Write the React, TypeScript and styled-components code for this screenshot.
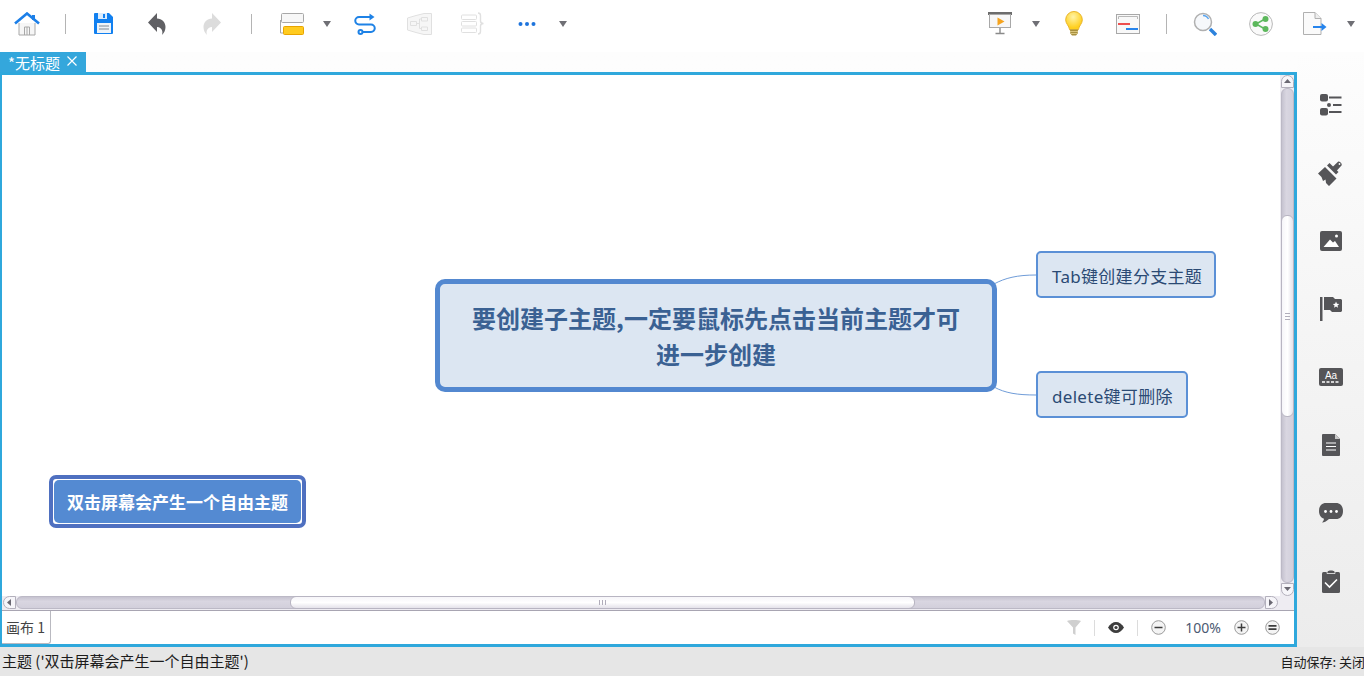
import styled, { createGlobalStyle } from "styled-components";

const GlobalStyle = createGlobalStyle`
  html, body {
    margin: 0;
    padding: 0;
    height: 100%;
    overflow: hidden;
    background: #ffffff;
    font-family: "Noto Sans CJK SC", "Noto Sans", sans-serif;
  }
  #root {
    height: 100%;
  }
`;

const Page = styled.div`
  width: 1364px;
  height: 676px;
  display: flex;
  flex-direction: column;
`;

const Toolbar = styled.header`
  height: 52px;
  flex: none;
  display: flex;
  justify-content: space-between;
  background: #ffffff;
`;

const ToolGroup = styled.div`
  display: flex;
`;

const Slot = styled.div<{ $w: number }>`
  width: ${(p) => p.$w}px;
  flex: none;
  display: flex;
  align-items: center;
  justify-content: center;
  padding-bottom: 5px;
  box-sizing: border-box;
`;

const Sep = styled.div`
  width: 1px;
  height: 20px;
  background: #b4b4b4;
`;

const Caret = styled.div`
  width: 0;
  height: 0;
  border-left: 4px solid transparent;
  border-right: 4px solid transparent;
  border-top: 6px solid #6f6f75;
`;

const Middle = styled.div`
  flex: 1;
  min-height: 0;
  display: flex;
`;

const Workspace = styled.div`
  width: 1297px;
  flex: none;
  display: flex;
  flex-direction: column;
  background: linear-gradient(#fdfdfd, #fbfbfb);
`;

const TabRow = styled.div`
  height: 20px;
  flex: none;
  display: flex;
`;

const FileTab = styled.div`
  width: 86px;
  height: 20px;
  box-sizing: border-box;
  background: #34a7dc;
  color: #ffffff;
  font-size: 15px;
  line-height: 21px;
  padding-left: 8px;
  display: flex;
  gap: 7px;
  white-space: nowrap;
`;

const Frame = styled.div`
  flex: 1;
  min-height: 0;
  display: flex;
  flex-direction: column;
  border: 3px solid #2fa8dc;
  border-left-width: 2px;
  background: #ffffff;
`;

const ViewRow = styled.div`
  flex: 1;
  min-height: 0;
  display: flex;
`;

const Canvas = styled.div`
  flex: 1;
  position: relative;
  overflow: hidden;
  background: #ffffff;
`;

const Connectors = styled.svg`
  position: absolute;
  left: 0;
  top: 0;
  width: 100%;
  height: 100%;
`;

const MainTopic = styled.div`
  position: absolute;
  left: 433px;
  top: 204px;
  width: 562px;
  height: 113px;
  box-sizing: border-box;
  border: 5px solid #5388d0;
  border-radius: 10px;
  background: #dce6f2;
  color: #3a6193;
  font-size: 24px;
  font-weight: 700;
  line-height: 36px;
  text-align: center;
  padding: 16px 26px 0;
`;

const SubTopic = styled.div<{ $left: number; $top: number; $w: number }>`
  position: absolute;
  left: ${(p) => p.$left}px;
  top: ${(p) => p.$top}px;
  width: ${(p) => p.$w}px;
  height: 47px;
  box-sizing: border-box;
  border: 2px solid #5b90d6;
  border-radius: 5px;
  background: #dce6f2;
  color: #2b4a74;
  font-family: "Noto Sans", "Noto Sans CJK SC", sans-serif;
  font-size: 17px;
  letter-spacing: 0.3px;
  line-height: 45px;
  padding: 1px 0 0 14px;
  white-space: nowrap;
`;

const FreeTopic = styled.div`
  position: absolute;
  left: 47px;
  top: 400px;
  width: 257px;
  height: 53px;
  box-sizing: border-box;
  border: 4px solid #4f70c0;
  border-radius: 7px;
  background: #ffffff;
  padding: 1px;
`;

const FreeTopicInner = styled.div`
  height: 100%;
  border-radius: 5px;
  background: #548ad2;
  color: #ffffff;
  font-size: 17px;
  font-weight: 700;
  line-height: 43px;
  text-align: center;
  white-space: nowrap;
`;

const VScroll = styled.div`
  width: 14px;
  flex: none;
  background: #eeecf2;
  display: flex;
  flex-direction: column;
  align-items: center;
`;

const ScrollEnd = styled.div`
  width: 13px;
  height: 13px;
  flex: none;
  border: 1px solid #b3b0bc;
  box-sizing: border-box;
  background: #f6f5f9;
  display: flex;
  align-items: center;
  justify-content: center;
`;

const VEnd = styled(ScrollEnd)<{ $bottom?: boolean }>`
  border-radius: ${(p) => (p.$bottom ? "0 0 7px 7px" : "7px 7px 0 0")};
`;

const HEnd = styled(ScrollEnd)<{ $right?: boolean }>`
  border-radius: ${(p) => (p.$right ? "0 7px 7px 0" : "7px 0 0 7px")};
`;

const VTrack = styled.div`
  flex: 1;
  width: 13px;
  box-sizing: border-box;
  border-radius: 6px;
  background: linear-gradient(90deg, #c6c3d0, #d9d6e1 40%, #d2cfdb);
  border: 1px solid #bcb9c6;
  padding-top: 126px;
`;

const VThumb = styled.div`
  height: 200px;
  border-radius: 6px;
  background: linear-gradient(90deg, #f6f5f9, #ffffff 50%, #e4e2ea);
  border: 1px solid #b8b5c2;
  margin: 0 -1px;
  display: flex;
  align-items: center;
  justify-content: center;
`;

const Grip = styled.div<{ $h?: boolean }>`
  width: ${(p) => (p.$h ? "7px" : "5px")};
  height: ${(p) => (p.$h ? "5px" : "7px")};
  background: ${(p) =>
    p.$h
      ? "repeating-linear-gradient(90deg, #b0adba 0 1px, transparent 1px 3px)"
      : "repeating-linear-gradient(#b0adba 0 1px, transparent 1px 3px)"};
`;

const HScroll = styled.div`
  height: 15px;
  flex: none;
  background: #eeecf2;
  display: flex;
  align-items: flex-start;
  border-bottom: 1px solid #a8a5b2;
  box-sizing: border-box;
  padding: 0 16px 0 1px;
`;

const HTrack = styled.div`
  flex: 1;
  height: 13px;
  box-sizing: border-box;
  border-radius: 6px;
  background: linear-gradient(#c6c3d0, #d9d6e1 40%, #d2cfdb);
  border: 1px solid #bcb9c6;
  padding-left: 273px;
`;

const HThumb = styled.div`
  width: 625px;
  height: 13px;
  box-sizing: border-box;
  border-radius: 6px;
  background: linear-gradient(#f6f5f9, #ffffff 50%, #e4e2ea);
  border: 1px solid #b8b5c2;
  margin-top: -1px;
  display: flex;
  align-items: center;
  justify-content: center;
`;

const SheetBar = styled.div`
  height: 33px;
  flex: none;
  display: flex;
  align-items: center;
  background: #ffffff;
`;

const SheetTab = styled.div`
  width: 49px;
  height: 33px;
  box-sizing: border-box;
  border: 1px solid #b9b9c0;
  border-top: none;
  border-left: none;
  border-radius: 0 0 3px 0;
  font-size: 14px;
  line-height: 32px;
  padding-left: 4px;
  color: #444444;
  white-space: nowrap;
`;

const SheetTools = styled.div`
  margin-left: auto;
  display: flex;
  align-items: center;
  height: 100%;
`;

const ThinSep = styled.div`
  width: 1px;
  height: 16px;
  background: #dcdcdc;
`;

const Zoom = styled.div`
  width: 53px;
  box-sizing: border-box;
  padding-right: 5px;
  text-align: center;
  font-size: 14px;
  color: #4c5a72;
  font-family: "Noto Sans", "Noto Sans CJK SC", sans-serif;
`;

const Sidebar = styled.aside`
  flex: 1;
  display: flex;
  flex-direction: column;
  padding-top: 19px;
  background: linear-gradient(#fdfdfd, #ececec);
`;

const SideItem = styled.div`
  height: 68px;
  flex: none;
  display: flex;
  align-items: center;
  justify-content: center;
`;

const StatusBar = styled.footer`
  height: 29px;
  flex: none;
  background: #e6e6e6;
  display: flex;
  justify-content: space-between;
  font-size: 15px;
  line-height: 27px;
  color: #1c1c1c;
  padding-left: 2px;
  white-space: nowrap;
  overflow: hidden;
`;

const AutoSave = styled.span`
  font-size: 13px;
  line-height: 29px;
  margin-right: -1px;
`;

const Dark = "#555558";

const HomeIcon = () => (
  <svg width="26" height="24" viewBox="0 0 26 24">
    <path d="M5 11v12h16V11" fill="#f6f6f6" stroke="#a8a8a8" />
    <path d="M10.500 23v-8h5v8M13 15v8" fill="none" stroke="#a8a8a8" />
    <path d="M1 11.500 13 1.500l12 10" fill="none" stroke="#1c7fe8" strokeWidth="2.600" />
    <path d="M18 3h3v5h-3z" fill="#1c7fe8" />
  </svg>
);

const SaveIcon = () => (
  <svg width="20" height="21" viewBox="0 0 20 21">
    <path d="M1 0h14l4 4v16a1 1 0 0 1-1 1H1a1 1 0 0 1-1-1V1a1 1 0 0 1 1-1z" fill="#1180f0" />
    <path d="M4 0h9v6H4z" fill="#ffffff" opacity=".85" />
    <path d="M9 1h2v4H9z" fill="#1180f0" />
    <path d="M3 10h14v10H3z" fill="#eef3f8" />
    <path d="M5 13h10M5 16h10" stroke="#7d8894" strokeWidth="1" />
  </svg>
);

const UndoIcon = ({ color, flip }: { color: string; flip?: boolean }) => (
  <svg width="18" height="22" viewBox="0 0 18 22" style={flip ? { transform: "scaleX(-1)" } : undefined}>
    <path d="M9 0v5.500c5 .3 8.500 3.600 8.500 8.500 0 3.200-1.300 6-3.500 8 1-3 .4-7.500-5-8V19L0 9.500z" fill={color} />
  </svg>
);

const TopicIcon = () => (
  <svg width="24" height="22" viewBox="0 0 24 22">
    <path d="M.5 7v13h3" fill="none" stroke="#a8a8a8" />
    <rect x="1.500" y=".5" width="22" height="9" rx="1" fill="#f7f7f7" stroke="#a8a8a8" />
    <rect x="3.500" y="13.500" width="20" height="8" rx="1" fill="#ffcb1f" stroke="#e8a400" />
  </svg>
);

const LinkIcon = () => (
  <svg width="22" height="22" viewBox="0 0 22 22" fill="none" stroke="#1e82e6" strokeWidth="2">
    <path d="M17 4H5a3.600 3.600 0 0 0 0 7.500h12a3.600 3.600 0 0 1 0 7.500H8" />
    <path d="M15.500 0.500v7l5-3.500z" fill="#1e82e6" stroke="none" />
    <circle cx="6.500" cy="19" r="2" />
  </svg>
);

const MapIcon = () => (
  <svg width="25" height="22" viewBox="0 0 25 22" fill="#f6f6f6" stroke="#e0e0e0">
    <path d="M.5 5 9 2.500l8-2h7.500v21H17l-8-2L.5 17z" />
    <path d="M3.500 8.500h6v4h-6zM14.500 4.500h6v3.500h-6zM14.500 14h6v3.500h-6zM9.500 10.500h3M12.500 6v9.500M12.500 6h2M12.500 15.500h2" fill="none" />
  </svg>
);

const BraceIcon = () => (
  <svg width="24" height="24" viewBox="0 0 24 24" fill="none" stroke="#e0e0e0" strokeWidth="1">
    <rect x=".5" y="3" width="15" height="4.500" rx="1" />
    <rect x=".5" y="9.500" width="15" height="4.500" rx="1" />
    <rect x=".5" y="16" width="15" height="4.500" rx="1" />
    <path d="M17 1c2 0 2.500 1 2.500 2.500v5.500c0 1 1 2.500 3 2.500-2 0-3 1.500-3 2.500v5.500c0 1.500-.5 2.500-2.500 2.500" strokeWidth="1.400" />
  </svg>
);

const DotsIcon = () => (
  <svg width="18" height="6" viewBox="0 0 18 6" fill="#1e74dc">
    <circle cx="2.500" cy="3" r="2" />
    <circle cx="9" cy="3" r="2" />
    <circle cx="15.500" cy="3" r="2" />
  </svg>
);

const PresentIcon = () => (
  <svg width="24" height="23" viewBox="0 0 24 23">
    <rect x="0" y="0" width="24" height="3" fill="#6c6c6c" />
    <rect x="1.500" y="2.500" width="21" height="13" fill="#f7f7f7" stroke="#a8a8a8" />
    <path d="M9.500 5.500v8l7-4z" fill="#f5a31e" />
    <path d="M12 16v5M7.500 21.500h9" stroke="#8a8a8a" strokeWidth="1.400" />
  </svg>
);

const BulbIcon = () => (
  <svg width="18" height="25" viewBox="0 0 18 25">
    <defs>
      <radialGradient id="bulbGlow" cx="45%" cy="30%" r="60%">
        <stop offset="0" stopColor="#fff3a6" />
        <stop offset="1" stopColor="#ffcf1c" />
      </radialGradient>
    </defs>
    <path d="M9 .5a8.300 8.300 0 0 0-8.300 8.300c0 4 3.300 5.700 4 10h8.600c.7-4.300 4-6 4-10A8.300 8.300 0 0 0 9 .5z" fill="url(#bulbGlow)" stroke="#e9b52c" />
    <path d="M5 18.500h8l-.3 4-1.700 2H7l-1.700-2z" fill="#a8903f" />
    <path d="M5 20.500h8M5.500 22.500h7" stroke="#e6d28c" strokeWidth=".8" />
  </svg>
);

const GanttIcon = () => (
  <svg width="24" height="20" viewBox="0 0 24 20">
    <rect x=".5" y=".5" width="23" height="19" fill="#f8f8f8" stroke="#a8a8a8" />
    <path d="M2.500 5V2.500h19V5" fill="none" stroke="#b8b8b8" />
    <rect x="2" y="9" width="12" height="2" fill="#ee4f4f" />
    <rect x="10" y="14" width="12" height="2" fill="#2684ec" />
  </svg>
);

const SearchIcon = () => (
  <svg width="24" height="24" viewBox="0 0 24 24" fill="none">
    <circle cx="10" cy="10" r="8.500" fill="#f6f8fb" stroke="#b0b0b0" strokeWidth="1.500" />
    <path d="M10 3.500a6.500 6.500 0 0 1 5.500 3.500" stroke="#5aa5ef" strokeWidth="1.400" />
    <path d="M17 17l6 6" stroke="#2c82dc" strokeWidth="3.400" />
  </svg>
);

const ShareIcon = () => (
  <svg width="24" height="24" viewBox="0 0 24 24">
    <circle cx="12" cy="12" r="11.400" fill="#fafafa" stroke="#b8b8b8" />
    <path d="M16 7l-9 5 9 5" fill="none" stroke="#5cb85c" strokeWidth="1.500" />
    <circle cx="16.500" cy="7" r="3" fill="#5cb85c" />
    <circle cx="6.500" cy="12" r="3" fill="#5cb85c" />
    <circle cx="16.500" cy="17" r="3" fill="#5cb85c" />
  </svg>
);

const ExportIcon = () => (
  <svg width="24" height="23" viewBox="0 0 24 23">
    <path d="M.5.500h11.500l6 6v16H.5z" fill="#fafafa" stroke="#b0b0b0" />
    <path d="M12 .500v6h6" fill="#eeeeee" stroke="#b0b0b0" />
    <path d="M10 15h9" stroke="#2684ec" strokeWidth="2" />
    <path d="M18.500 11l5 4-5 4z" fill="#2684ec" />
  </svg>
);

const OutlineSide = () => (
  <svg width="22" height="22" viewBox="0 0 22 22" fill={Dark}>
    <rect x="0" y="0" width="8" height="7.500" rx="2" />
    <rect x="0" y="14" width="8" height="7.500" rx="2" />
    <circle cx="9" cy="11" r="2" />
    <rect x="9" y="2.500" width="12.500" height="2" />
    <rect x="13" y="10" width="8.500" height="2" />
    <rect x="9" y="17" width="12.500" height="2" />
  </svg>
);

const BrushSide = () => (
  <svg width="25" height="25" viewBox="0 0 25 25">
    <path d="M0 12.500 7 6l11.500 11.500L11 25l-3-3-.5-3.500L5 20l-1.500-4z" fill={Dark} />
    <path d="M9 4.500 11.500 2 20.500 11 18 13.500z" fill={Dark} />
    <path d="M14 6.500 20 .8c1.300-1 4.700 2.200 3.500 3.700L18 10.500z" fill={Dark} />
    <circle cx="21.500" cy="3" r=".9" fill="#f6f6f6" />
  </svg>
);

const ImageSide = () => (
  <svg width="22" height="20" viewBox="0 0 22 20">
    <rect width="22" height="20" rx="2" fill={Dark} />
    <path d="M3.500 16 10 8.500 13 11.500 15 10 19 16z" fill="#ffffff" />
    <circle cx="16.500" cy="5" r="1.500" fill="#ffffff" />
  </svg>
);

const FlagSide = () => (
  <svg width="22" height="24" viewBox="0 0 22 24" fill={Dark}>
    <rect x="0" y="0" width="2.500" height="24" />
    <path d="M4 0h9l2 2h6l1 1v11l-1 1h-9l-2-2H4z" />
    <path d="M16 4.500l1 2.200 2.300.2-1.800 1.500.6 2.300-2.100-1.300-2 1.300.6-2.300-1.800-1.500 2.300-.2z" fill="#ffffff" />
  </svg>
);

const TextSide = () => (
  <svg width="24" height="18" viewBox="0 0 24 18">
    <rect width="24" height="18" rx="2" fill={Dark} />
    <text x="12" y="10.500" fontSize="10" fill="#ffffff" textAnchor="middle" fontFamily="Liberation Sans">Aa</text>
    <path d="M3 14h18" stroke="#ffffff" strokeWidth="1.500" strokeDasharray="3 1.500" />
  </svg>
);

const NoteSide = () => (
  <svg width="18" height="22" viewBox="0 0 18 22">
    <path d="M1 0h12l5 5v16a1 1 0 0 1-1 1H1a1 1 0 0 1-1-1V1a1 1 0 0 1 1-1z" fill={Dark} />
    <path d="M13 0l5 5h-5z" fill="#c8c8c8" />
    <path d="M4 9h10M4 12.500h10M4 16h10" stroke="#ffffff" strokeWidth="1" />
  </svg>
);

const CommentSide = () => (
  <svg width="24" height="20" viewBox="0 0 24 20">
    <path d="M7 0h10c4 0 7 2.500 7 8s-3 8-7 8H10c-2 2-4.500 3.300-7 3.500 1-1 1.700-2 2-3.800C2 15 0 12 0 8c0-5.500 3-8 7-8z" fill={Dark} />
    <circle cx="6.500" cy="8.500" r="1.400" fill="#ffffff" />
    <circle cx="12" cy="8.500" r="1.400" fill="#ffffff" />
    <circle cx="17.500" cy="8.500" r="1.400" fill="#ffffff" />
  </svg>
);

const TaskSide = () => (
  <svg width="18" height="23" viewBox="0 0 18 23">
    <rect x="0" y="2" width="18" height="21" rx="1.500" fill={Dark} />
    <path d="M5 3.500V2.500C5 1 6.500 0 9 0s4 1 4 2.500v1z" fill={Dark} stroke="#f2f2f2" strokeWidth=".8" />
    <path d="M3 12.500l4.500 4.500 7.500-7.500" fill="none" stroke="#ffffff" strokeWidth="1.600" />
  </svg>
);

const ArrowGlyph = ({ dir }: { dir: "up" | "down" | "left" | "right" }) => {
  const points = {
    up: "0,5 3.500,1 7,5",
    down: "0,1 3.500,5 7,1",
    left: "5,0 1,3.500 5,7",
    right: "1,0 5,3.500 1,7",
  }[dir];
  return (
    <svg width="7" height="7" viewBox="0 0 7 7">
      <polygon points={points} fill="#6a6872" />
    </svg>
  );
};

const FilterIcon = () => (
  <svg width="14" height="15" viewBox="0 0 14 15">
    <path d="M0 1c3-1.300 11-1.300 14 0L8.500 7.500V15L6 13.500v-6z" fill="#cfcfcf" />
  </svg>
);

const EyeIcon = () => (
  <svg width="16" height="11" viewBox="0 0 16 11">
    <path d="M0 5.500C2 2 5 0 8 0s6 2 8 5.500C14 9 11 11 8 11S2 9 0 5.500z" fill="#3d3d3d" />
    <circle cx="8" cy="5.500" r="2.800" fill="#ffffff" />
    <circle cx="8" cy="5.500" r="1.600" fill="#3d3d3d" />
  </svg>
);

const RoundIcon = ({ kind }: { kind: "minus" | "plus" | "fit" }) => (
  <svg width="15" height="15" viewBox="0 0 15 15" fill="none">
    <circle cx="7.500" cy="7.500" r="6.800" fill="#f4f4f4" stroke="#9a9a9a" />
    {kind === "fit" ? (
      <path d="M3.500 5.800h8M3.500 9.200h8" stroke="#3d3d3d" strokeWidth="1.800" />
    ) : (
      <path d="M3.500 7.500h8" stroke="#3d3d3d" strokeWidth="1.500" />
    )}
    {kind === "plus" && <path d="M7.500 3.500v8" stroke="#3d3d3d" strokeWidth="1.500" />}
  </svg>
);

const CloseGlyph = () => (
  <svg width="10" height="10" viewBox="0 0 10 10" style={{ marginTop: 4 }}>
    <path d="M.5.500l9 9M9.500.500l-9 9" stroke="#ffffff" strokeWidth="1.200" />
  </svg>
);

const GapSlot = styled.div<{ $w: number }>`
  width: ${(p) => p.$w}px;
  flex: none;
  display: flex;
  justify-content: center;
  align-items: center;
`;

export default function App() {
  return (
    <Page>
      <GlobalStyle />
      <Toolbar>
        <ToolGroup>
          <Slot $w={54}><HomeIcon /></Slot>
          <Slot $w={22}><Sep /></Slot>
          <Slot $w={56}><SaveIcon /></Slot>
          <Slot $w={50}><UndoIcon color="#606064" /></Slot>
          <Slot $w={60}><UndoIcon color="#dcdcdc" flip /></Slot>
          <Slot $w={18}><Sep /></Slot>
          <Slot $w={64}><TopicIcon /></Slot>
          <Slot $w={6}><Caret /></Slot>
          <Slot $w={70}><LinkIcon /></Slot>
          <Slot $w={38}><MapIcon /></Slot>
          <Slot $w={70}><BraceIcon /></Slot>
          <Slot $w={38}><DotsIcon /></Slot>
          <Slot $w={34}><Caret /></Slot>
        </ToolGroup>
        <ToolGroup>
          <Slot $w={56}><PresentIcon /></Slot>
          <Slot $w={16}><Caret /></Slot>
          <Slot $w={60}><BulbIcon /></Slot>
          <Slot $w={48}><GanttIcon /></Slot>
          <Slot $w={28}><Sep /></Slot>
          <Slot $w={50}><SearchIcon /></Slot>
          <Slot $w={62}><ShareIcon /></Slot>
          <Slot $w={46}><ExportIcon /></Slot>
          <Slot $w={26}><Caret /></Slot>
        </ToolGroup>
      </Toolbar>
      <Middle>
        <Workspace>
          <TabRow>
            <FileTab>*无标题<CloseGlyph /></FileTab>
          </TabRow>
          <Frame>
            <ViewRow>
              <Canvas>
                <Connectors>
                  <path d="M992 209C1003 203 1015 200 1034 200" fill="none" stroke="#6f9cd8" strokeWidth="1" />
                  <path d="M992 312C1003 318 1015 320 1034 320" fill="none" stroke="#6f9cd8" strokeWidth="1" />
                </Connectors>
                <MainTopic>
                  要创建子主题,一定要鼠标先点击当前主题才可
                  <br />
                  进一步创建
                </MainTopic>
                <SubTopic $left={1034} $top={176} $w={180}>Tab键创建分支主题</SubTopic>
                <SubTopic $left={1034} $top={296} $w={152}>delete键可删除</SubTopic>
                <FreeTopic>
                  <FreeTopicInner>双击屏幕会产生一个自由主题</FreeTopicInner>
                </FreeTopic>
              </Canvas>
              <VScroll>
                <VEnd><ArrowGlyph dir="up" /></VEnd>
                <VTrack>
                  <VThumb><Grip /></VThumb>
                </VTrack>
                <VEnd $bottom><ArrowGlyph dir="down" /></VEnd>
              </VScroll>
            </ViewRow>
            <HScroll>
              <HEnd><ArrowGlyph dir="left" /></HEnd>
              <HTrack>
                <HThumb><Grip $h /></HThumb>
              </HTrack>
              <HEnd $right><ArrowGlyph dir="right" /></HEnd>
            </HScroll>
            <SheetBar>
              <SheetTab>画布 1</SheetTab>
              <SheetTools>
                <GapSlot $w={40}><FilterIcon /></GapSlot>
                <ThinSep />
                <GapSlot $w={42}><EyeIcon /></GapSlot>
                <ThinSep />
                <GapSlot $w={41}><RoundIcon kind="minus" /></GapSlot>
                <Zoom>100%</Zoom>
                <GapSlot $w={18}><RoundIcon kind="plus" /></GapSlot>
                <GapSlot $w={44}><RoundIcon kind="fit" /></GapSlot>
              </SheetTools>
            </SheetBar>
          </Frame>
        </Workspace>
        <Sidebar>
          <SideItem><OutlineSide /></SideItem>
          <SideItem><BrushSide /></SideItem>
          <SideItem><ImageSide /></SideItem>
          <SideItem><FlagSide /></SideItem>
          <SideItem><TextSide /></SideItem>
          <SideItem><NoteSide /></SideItem>
          <SideItem><CommentSide /></SideItem>
          <SideItem><TaskSide /></SideItem>
        </Sidebar>
      </Middle>
      <StatusBar>
        <span>主题 ('双击屏幕会产生一个自由主题')</span>
        <AutoSave>自动保存: 关闭</AutoSave>
      </StatusBar>
    </Page>
  );
}
